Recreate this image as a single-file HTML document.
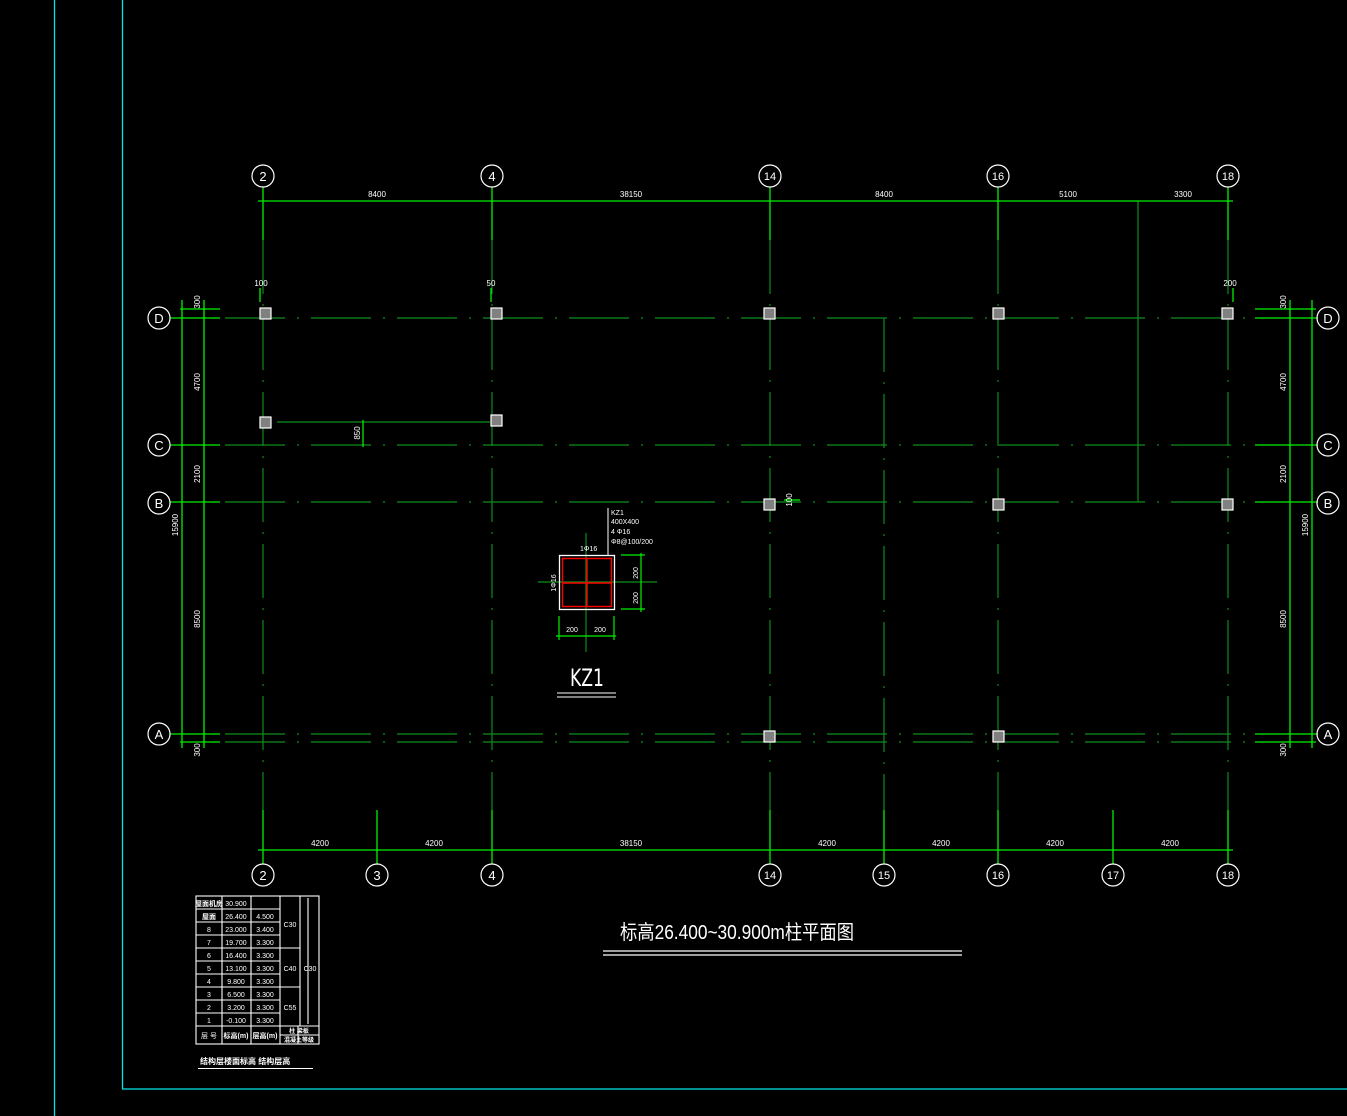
<!DOCTYPE html>
<html><head><meta charset="utf-8"><style>
html,body{margin:0;padding:0;background:#000;}
svg{display:block}
text{font-family:"Liberation Sans","Noto Sans CJK SC",sans-serif;fill:#fff}
</style></head><body>
<svg width="1347" height="1116" viewBox="0 0 1347 1116" xmlns="http://www.w3.org/2000/svg">
<rect width="1347" height="1116" fill="#000"/>
<g stroke="#00e5e5" stroke-width="1.3" fill="none">
<line x1="54.5" y1="0" x2="54.5" y2="1116"/>
<line x1="122.5" y1="0" x2="122.5" y2="1089"/>
<line x1="122" y1="1089" x2="1347" y2="1089"/>
</g>
<g stroke="#0c8c1c" stroke-width="1.2" fill="none" stroke-dasharray="54 10 2 10">
<line x1="263" y1="240" x2="263" y2="810"/>
<line x1="492" y1="240" x2="492" y2="810"/>
<line x1="770" y1="240" x2="770" y2="810"/>
<line x1="884" y1="318" x2="884" y2="810"/>
<line x1="998" y1="240" x2="998" y2="810"/>
<line x1="1228" y1="240" x2="1228" y2="810"/>
<line x1="1138" y1="201" x2="1138" y2="502" stroke-dasharray="none"/>
<line x1="225" y1="318" x2="1255" y2="318" stroke-dasharray="60 12 2 12"/>
<line x1="225" y1="445" x2="1255" y2="445" stroke-dasharray="60 12 2 12"/>
<line x1="225" y1="502" x2="1255" y2="502" stroke-dasharray="60 12 2 12"/>
<line x1="225" y1="734" x2="1255" y2="734" stroke-dasharray="60 12 2 12"/>
<line x1="225" y1="742" x2="1255" y2="742" stroke-dasharray="60 12 2 12"/>
<line x1="277" y1="422" x2="490" y2="422" stroke-dasharray="none"/>
<line x1="363" y1="420" x2="363" y2="447" stroke="#00ff00" stroke-dasharray="none"/>
</g>
<g stroke="#00f000" stroke-width="1.3" fill="none">
<line x1="258" y1="201" x2="1233" y2="201"/>
<line x1="258" y1="850" x2="1233" y2="850"/>
<g>
<line x1="263" y1="187" x2="263" y2="240"/><line x1="492" y1="187" x2="492" y2="240"/>
<line x1="770" y1="187" x2="770" y2="240"/><line x1="998" y1="187" x2="998" y2="240"/>
<line x1="1228" y1="187" x2="1228" y2="240"/>
<line x1="263" y1="810" x2="263" y2="864"/><line x1="377" y1="810" x2="377" y2="864"/>
<line x1="492" y1="810" x2="492" y2="864"/><line x1="770" y1="810" x2="770" y2="864"/>
<line x1="884" y1="810" x2="884" y2="864"/><line x1="998" y1="810" x2="998" y2="864"/>
<line x1="1113" y1="810" x2="1113" y2="864"/><line x1="1228" y1="810" x2="1228" y2="864"/>
</g>
<line x1="182" y1="300" x2="182" y2="748"/>
<line x1="204" y1="300" x2="204" y2="748"/>
<line x1="180" y1="309" x2="220" y2="309"/>
<line x1="170" y1="318" x2="220" y2="318"/>
<line x1="170" y1="445" x2="220" y2="445"/>
<line x1="170" y1="502" x2="220" y2="502"/>
<line x1="170" y1="734" x2="220" y2="734"/>
<line x1="180" y1="742" x2="220" y2="742"/>
<line x1="1290" y1="300" x2="1290" y2="748"/>
<line x1="1312" y1="300" x2="1312" y2="748"/>
<line x1="1255" y1="309" x2="1316" y2="309"/>
<line x1="1255" y1="318" x2="1318" y2="318"/>
<line x1="1255" y1="445" x2="1318" y2="445"/>
<line x1="1255" y1="502" x2="1318" y2="502"/>
<line x1="1255" y1="734" x2="1318" y2="734"/>
<line x1="1255" y1="742" x2="1316" y2="742"/>
<line x1="260" y1="288" x2="260" y2="302"/><line x1="491" y1="288" x2="491" y2="302"/><line x1="1233" y1="288" x2="1233" y2="302"/>
<line x1="784" y1="500" x2="800" y2="500"/>
</g>
<g fill="#808080" stroke="#fff" stroke-width="1.2">
<rect x="260" y="308" width="11" height="11"/><rect x="491" y="308" width="11" height="11"/>
<rect x="764" y="308" width="11" height="11"/><rect x="993" y="308" width="11" height="11"/>
<rect x="1222" y="308" width="11" height="11"/>
<rect x="260" y="417" width="11" height="11"/><rect x="491" y="415" width="11" height="11"/>
<rect x="764" y="499" width="11" height="11"/><rect x="993" y="499" width="11" height="11"/>
<rect x="1222" y="499" width="11" height="11"/>
<rect x="764" y="731" width="11" height="11"/><rect x="993" y="731" width="11" height="11"/>
</g>
<g fill="none" stroke="#fff" stroke-width="1.2">
<circle cx="263" cy="176" r="11"/><circle cx="492" cy="176" r="11"/><circle cx="770" cy="176" r="11"/>
<circle cx="998" cy="176" r="11"/><circle cx="1228" cy="176" r="11"/>
<circle cx="263" cy="875" r="11"/><circle cx="377" cy="875" r="11"/><circle cx="492" cy="875" r="11"/>
<circle cx="770" cy="875" r="11"/><circle cx="884" cy="875" r="11"/><circle cx="998" cy="875" r="11"/>
<circle cx="1113" cy="875" r="11"/><circle cx="1228" cy="875" r="11"/>
<circle cx="159" cy="318" r="11"/><circle cx="159" cy="445" r="11"/><circle cx="159" cy="503" r="11"/><circle cx="159" cy="734" r="11"/>
<circle cx="1328" cy="318" r="11"/><circle cx="1328" cy="445" r="11"/><circle cx="1328" cy="503" r="11"/><circle cx="1328" cy="734" r="11"/>
</g>
<g font-size="13" text-anchor="middle">
<text x="263" y="181">2</text><text x="492" y="181">4</text><text x="770" y="180" font-size="11">14</text>
<text x="998" y="180" font-size="11">16</text><text x="1228" y="180" font-size="11">18</text>
<text x="263" y="880">2</text><text x="377" y="880">3</text><text x="492" y="880">4</text>
<text x="770" y="879" font-size="11">14</text><text x="884" y="879" font-size="11">15</text><text x="998" y="879" font-size="11">16</text>
<text x="1113" y="879" font-size="11">17</text><text x="1228" y="879" font-size="11">18</text>
<text x="159" y="323">D</text><text x="159" y="450">C</text><text x="159" y="508">B</text><text x="159" y="739">A</text>
<text x="1328" y="323">D</text><text x="1328" y="450">C</text><text x="1328" y="508">B</text><text x="1328" y="739">A</text>
</g>
<g font-size="8" text-anchor="middle">
<text x="377" y="197">8400</text><text x="631" y="197">38150</text><text x="884" y="197">8400</text>
<text x="1068" y="197">5100</text><text x="1183" y="197">3300</text>
<text x="320" y="846">4200</text><text x="434" y="846">4200</text><text x="631" y="846">38150</text>
<text x="827" y="846">4200</text><text x="941" y="846">4200</text><text x="1055" y="846">4200</text><text x="1170" y="846">4200</text>
<text x="261" y="286">100</text><text x="491" y="286">50</text><text x="1230" y="286">200</text>
<g transform="rotate(-90)">
<text x="-302" y="200">300</text><text x="-382" y="200">4700</text><text x="-474" y="200">2100</text>
<text x="-619" y="200">8500</text><text x="-525" y="178">15900</text><text x="-750" y="200">300</text>
<text x="-302" y="1286">300</text><text x="-382" y="1286">4700</text><text x="-474" y="1286">2100</text>
<text x="-619" y="1286">8500</text><text x="-525" y="1308">15900</text><text x="-750" y="1286">300</text>
<text x="-433" y="360">850</text><text x="-500" y="792">100</text>
</g>
</g>
<g>
<line x1="538" y1="582" x2="657" y2="582" stroke="#0c8c1c" stroke-width="1.2"/>
<line x1="586" y1="533" x2="586" y2="652" stroke="#0c8c1c" stroke-width="1.2"/>
<rect x="559.5" y="555.5" width="55" height="54" fill="none" stroke="#fff" stroke-width="1.3"/>
<g fill="none" stroke="#f00" stroke-width="1.4">
<rect x="562.5" y="558.5" width="49" height="48"/>
<line x1="562" y1="583" x2="611" y2="583"/><line x1="587" y1="558" x2="587" y2="607"/>
</g>
<line x1="608" y1="508" x2="608" y2="555" stroke="#fff" stroke-width="1"/>
<g stroke="#00f000" stroke-width="1.2">
<line x1="556" y1="636" x2="616" y2="636"/><line x1="559" y1="616" x2="559" y2="640"/><line x1="614" y1="616" x2="614" y2="640"/>
<line x1="641" y1="553" x2="641" y2="612"/><line x1="621" y1="555" x2="645" y2="555"/><line x1="621" y1="609" x2="645" y2="609"/>
</g>
<g font-size="7">
<text x="611" y="515">KZ1</text><text x="611" y="524">400X400</text><text x="611" y="534">4 Φ16</text><text x="611" y="544">Φ8@100/200</text>
<text x="580" y="551">1Φ16</text>
<text x="572" y="632" text-anchor="middle">200</text><text x="600" y="632" text-anchor="middle">200</text>
<g transform="rotate(-90)"><text x="-573" y="638" text-anchor="middle">200</text><text x="-598" y="638" text-anchor="middle">200</text><text x="-583" y="556" text-anchor="middle">1Φ16</text></g>
</g>
<text x="587" y="686" font-size="24" text-anchor="middle" style="font-family:'DejaVu Sans','Liberation Sans',sans-serif" textLength="34" lengthAdjust="spacingAndGlyphs">KZ1</text>
<line x1="557" y1="693" x2="616" y2="693" stroke="#fff" stroke-width="1"/>
<line x1="557" y1="697" x2="616" y2="697" stroke="#fff" stroke-width="1"/>
</g>
<text x="620" y="939" font-size="20" textLength="234" lengthAdjust="spacingAndGlyphs">标高26.400~30.900m柱平面图</text>
<line x1="603" y1="951" x2="962" y2="951" stroke="#fff" stroke-width="1.2"/>
<line x1="603" y1="955" x2="962" y2="955" stroke="#fff" stroke-width="1.2"/>
<g stroke="#fff" stroke-width="1.1" fill="none">
<rect x="196" y="896" width="123" height="148"/>
<line x1="222" y1="896" x2="222" y2="1044"/><line x1="251" y1="896" x2="251" y2="1044"/>
<line x1="280" y1="896" x2="280" y2="1044"/><line x1="298" y1="1026" x2="298" y2="1044"/>
<line x1="196" y1="909" x2="280" y2="909"/><line x1="196" y1="922" x2="280" y2="922"/>
<line x1="196" y1="935" x2="280" y2="935"/><line x1="196" y1="948" x2="300" y2="948"/>
<line x1="196" y1="961" x2="280" y2="961"/><line x1="196" y1="974" x2="280" y2="974"/>
<line x1="196" y1="987" x2="300" y2="987"/><line x1="196" y1="1000" x2="280" y2="1000"/>
<line x1="196" y1="1013" x2="280" y2="1013"/><line x1="196" y1="1026" x2="319" y2="1026"/>
<line x1="300" y1="896" x2="300" y2="1026"/>
<line x1="308" y1="898" x2="308" y2="1024"/>
<line x1="280" y1="1035" x2="319" y2="1035"/>
</g>
<g font-size="7" text-anchor="middle">
<text x="209" y="906" font-weight="bold">屋面机房</text><text x="236" y="906">30.900</text>
<text x="209" y="919" font-weight="bold">屋面</text><text x="236" y="919">26.400</text><text x="265" y="919">4.500</text>
<text x="209" y="932">8</text><text x="236" y="932">23.000</text><text x="265" y="932">3.400</text>
<text x="209" y="945">7</text><text x="236" y="945">19.700</text><text x="265" y="945">3.300</text>
<text x="209" y="958">6</text><text x="236" y="958">16.400</text><text x="265" y="958">3.300</text>
<text x="209" y="971">5</text><text x="236" y="971">13.100</text><text x="265" y="971">3.300</text>
<text x="209" y="984">4</text><text x="236" y="984">9.800</text><text x="265" y="984">3.300</text>
<text x="209" y="997">3</text><text x="236" y="997">6.500</text><text x="265" y="997">3.300</text>
<text x="209" y="1010">2</text><text x="236" y="1010">3.200</text><text x="265" y="1010">3.300</text>
<text x="209" y="1023">1</text><text x="236" y="1023">-0.100</text><text x="265" y="1023">3.300</text>
<text x="209" y="1038">层 号</text><text x="236" y="1038" font-weight="bold">标高(m)</text><text x="265" y="1038" font-weight="bold">层高(m)</text>
<text x="290" y="927">C30</text><text x="290" y="971">C40</text><text x="290" y="1010">C55</text><text x="310" y="971">C30</text>
<text x="299" y="1033" font-size="6" font-weight="bold">柱 梁板</text><text x="299" y="1042" font-size="6" font-weight="bold">混凝土等级</text>
</g>
<text x="200" y="1064" font-size="8" font-weight="bold">结构层楼面标高  结构层高</text>
<line x1="198" y1="1068.5" x2="313" y2="1068.5" stroke="#fff" stroke-width="1"/>
</svg>
</body></html>
